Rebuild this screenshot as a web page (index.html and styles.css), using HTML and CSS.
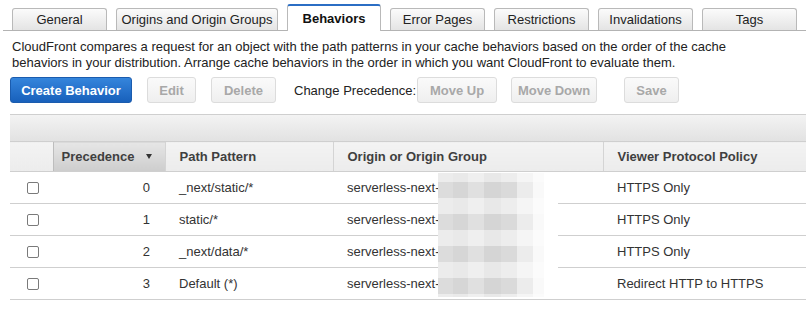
FILE: index.html
```html
<!DOCTYPE html>
<html lang="en">
<head>
  <meta charset="UTF-8" />
  <title>CloudFront Behaviors</title>
  <link rel="stylesheet" href="styles.css">
</head>
<body>
  <!-- Tabs -->
  <div class="tabs">
    <div class="tab">General</div>
    <div class="tab wide">Origins and Origin Groups</div>
    <div class="tab active">Behaviors</div>
    <div class="tab">Error Pages</div>
    <div class="tab">Restrictions</div>
    <div class="tab">Invalidations</div>
    <div class="tab">Tags</div>
  </div>

  <p class="intro">CloudFront compares a request for an object with the path patterns in your cache behaviors based on the order of the cache behaviors in your distribution. Arrange cache behaviors in the order in which you want CloudFront to evaluate them.</p>

  <div class="toolbar">
    <button class="btn primary">Create Behavior</button>
    <button class="btn edit" disabled>Edit</button>
    <button class="btn delete" disabled>Delete</button>
    <span class="label">Change Precedence:</span>
    <button class="btn up" disabled>Move Up</button>
    <button class="btn down" disabled>Move Down</button>
    <button class="btn save" disabled>Save</button>
  </div>

  <div class="grid-wrap">
    <div class="grid-band"></div>
    <table class="grid">
      <colgroup>
        <col class="col-check">
        <col class="col-prec">
        <col class="col-path">
        <col class="col-origin">
        <col class="col-policy">
      </colgroup>
      <thead>
        <tr>
          <th></th>
          <th class="sorted">Precedence <span class="caret"></span></th>
          <th>Path Pattern</th>
          <th>Origin or Origin Group</th>
          <th>Viewer Protocol Policy</th>
        </tr>
      </thead>
      <tbody>
        <tr>
          <td class="check"><input type="checkbox"></td>
          <td class="num">0</td>
          <td>_next/static/*</td>
          <td>serverless-next-</td>
          <td>HTTPS Only</td>
        </tr>
        <tr>
          <td class="check"><input type="checkbox"></td>
          <td class="num">1</td>
          <td>static/*</td>
          <td>serverless-next-</td>
          <td>HTTPS Only</td>
        </tr>
        <tr>
          <td class="check"><input type="checkbox"></td>
          <td class="num">2</td>
          <td>_next/data/*</td>
          <td>serverless-next-</td>
          <td>HTTPS Only</td>
        </tr>
        <tr>
          <td class="check"><input type="checkbox"></td>
          <td class="num">3</td>
          <td>Default (*)</td>
          <td>serverless-next-</td>
          <td>Redirect HTTP to HTTPS</td>
        </tr>
      </tbody>
    </table>

    <!-- pixelated redaction over origin names -->
    <div class="mosaic">
      <div class="m-row light short"></div>
      <div class="m-row dark"></div>
      <div class="m-row light"></div>
      <div class="m-row dark"></div>
      <div class="m-row light"></div>
      <div class="m-row dark"></div>
      <div class="m-row light"></div>
      <div class="m-row dark"></div>
      <div class="m-row light tail"></div>
    </div>
  </div>
</body>
</html>
```

FILE: styles.css
```css
body { margin: 0; background: #fff; font-family: "Liberation Sans", Arial, sans-serif; font-size: 13px; color: #222; overflow: hidden; width: 806px; }

/* Tabs */
.tabs { display: flex; align-items: flex-end; gap: 9px; height: 31px; margin-left: 3px; padding-left: 9px; border-bottom: 1px solid #b3b3b3; box-sizing: border-box; }
.tab {
  width: 95px; height: 22px; box-sizing: border-box;
  border: 1px solid #b9b9b9; border-bottom: none; border-radius: 3px 3px 0 0;
  background: linear-gradient(#fbfbfb, #e4e4e4);
  text-align: center; line-height: 21px; color: #222;
}
.tab.wide { width: 162px; }
.tab.active {
  width: 94px; height: 27px; margin-bottom: -1px; background: #fff;
  border-top: 2px solid #2b6ec4; font-weight: bold; line-height: 25px; color: #111;
}

.intro { margin: 8px 0 0 12px; width: 730px; line-height: 16px; color: #222; }

/* Buttons */
.toolbar { display: flex; align-items: center; margin: 6px 0 0 10px; height: 26px; }
.btn {
  height: 26px; padding: 0; border: 1px solid #dcdcdc; border-radius: 3px;
  background: linear-gradient(#fafafa, #efefef); color: #a8a8a8;
  font-family: inherit; font-size: 13px; font-weight: bold;
}
.btn.primary { width: 122px; color: #fff; border-color: #1b5cae; background: linear-gradient(#3585dc, #1860bb); }
.btn.edit { width: 49px; margin-left: 15px; }
.btn.delete { width: 65px; margin-left: 15px; }
.label { width: 118px; margin-left: 18px; white-space: nowrap; color: #222; }
.btn.up { width: 80px; margin-left: 5px; }
.btn.down { width: 86px; margin-left: 14px; }
.btn.save { width: 55px; margin-left: 27px; }

/* Grid */
.grid-wrap { position: relative; margin: 11px 0 0 10px; width: 796px; }
.grid-band { height: 26px; border-top: 1px solid #cfcfcf; background: linear-gradient(#f3f3f3, #e2e2e2); }
.grid { border-collapse: collapse; width: 796px; table-layout: fixed; }
.col-check { width: 43px; }
.col-prec { width: 112px; }
.col-path { width: 168px; }
.col-origin { width: 270px; }
.col-policy { width: 203px; }
.grid th {
  height: 29px; padding: 0 0 0 14px; text-align: left; font-weight: bold; color: #3f3f3f; white-space: nowrap;
  background: linear-gradient(#f3f3f3, #ececec);
  border-top: 1px solid #cfcfcf; border-bottom: 1px solid #cfcfcf; border-left: 1px solid #d4d4d4;
}
.grid th:first-child { border-left: none; }
.grid th.sorted { background: linear-gradient(#e6e6e6, #cdcdcd); border-left: 1px solid #bdbdbd; padding-left: 8px; }
.caret { display: inline-block; margin-left: 8px; border-left: 3.5px solid transparent; border-right: 3.5px solid transparent; border-top: 5px solid #333; vertical-align: 2px; }
.grid td { height: 31px; padding: 0 0 0 14px; border-bottom: 1px solid #cfcfcf; color: #333; white-space: nowrap; }
.grid td.num { text-align: right; padding: 0 15px 0 0; }
.grid td.check { padding: 0 0 0 17px; }
.grid input {
  appearance: none; display: block; margin: 0; width: 12px; height: 12px;
  border: 1px solid #7a7a7a; border-radius: 2px; background: #fff;
}

/* Redaction mosaic */
.mosaic { position: absolute; left: 428px; top: 59px; width: 120px; display: flex; flex-direction: column; }
.m-row { height: 16px; }
.m-row.short { height: 9px; }
.m-row.tail { height: 3px; }
.m-row.dark { background: linear-gradient(to right, #dcdcdc 0 15px, #d6d6d6 15px 30px, #e0e0e0 30px 46px, #d5d5d5 46px 63px, #dadada 63px 79px, #ececec 79px 95px, #f9f9f9 95px 106px, #fff 106px); }
.m-row.light { background: linear-gradient(to right, #ececec 0 15px, #e9e9e9 15px 30px, #efefef 30px 46px, #e8e8e8 46px 63px, #ededed 63px 79px, #f5f5f5 79px 95px, #fbfbfb 95px 106px, #fff 106px); }
```
